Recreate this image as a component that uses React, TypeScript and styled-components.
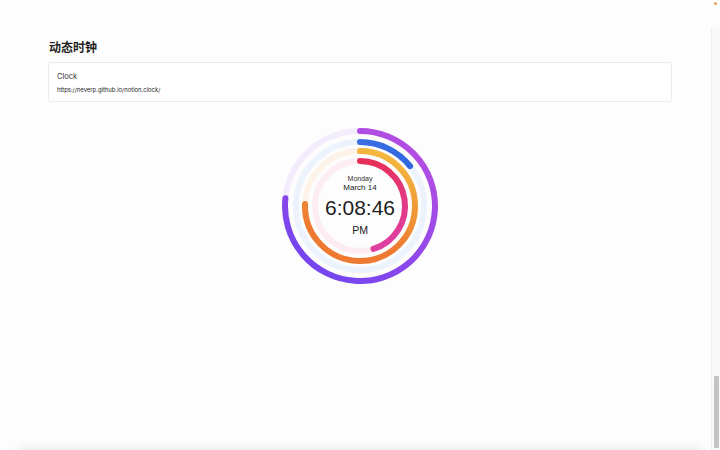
import React from "react"
import styled, { createGlobalStyle } from "styled-components"

const GlobalStyle = createGlobalStyle`
  html, body {
    margin: 0;
    padding: 0;
    background: #fdfdfd;
    overflow: hidden;
  }
  body {
    font-family: Inter, "Liberation Sans", "Noto Sans CJK SC", sans-serif;
    color: #222;
  }
`

const Page = styled.div`
  width: 720px;
  height: 450px;
  position: relative;
  overflow: hidden;
`

const Content = styled.main`
  width: 624px;
  margin-left: 48px;
  padding-top: 37px;
  display: flex;
  flex-direction: column;
`

const Title = styled.h1`
  margin: 0 0 0 1px;
  font-size: 12px;
  line-height: 20px;
  font-weight: 700;
  color: #1f1f1f;
  font-family: "Noto Sans CJK SC", sans-serif;
`

const Card = styled.div`
  margin-top: 5px;
  height: 38px;
  border: 1px solid #ececec;
  border-radius: 3px;
  background: #fff;
  padding: 0 8px;
  display: flex;
  flex-direction: column;
  justify-content: center;
  gap: 5px;
`

const CardTitle = styled.div`
  font-size: 7.5px;
  line-height: 9px;
  color: #333;
`

const CardLink = styled.div`
  font-size: 5.9px;
  line-height: 7px;
  color: #222;
`

const ClockWrap = styled.div`
  margin-top: 24px;
  align-self: center;
  display: grid;
  width: 160px;
  height: 160px;
  > * {
    grid-area: 1 / 1;
  }
`

const Face = styled.div`
  display: flex;
  flex-direction: column;
  align-items: center;
  justify-content: center;
  padding-bottom: 2px;
  font-family: "Liberation Sans", Arial, sans-serif;
`

const Weekday = styled.div`
  font-size: 7px;
  line-height: 8px;
  color: #333;
`

const DateText = styled.div`
  font-size: 8px;
  line-height: 10px;
  color: #222;
`

const Time = styled.div`
  font-size: 21px;
  line-height: 24px;
  margin-top: 3px;
  color: #1d1d1d;
`

const Meridiem = styled.div`
  font-size: 10.5px;
  line-height: 12px;
  margin-top: 4px;
  color: #222;
`

const ScrollTrack = styled.div`
  position: absolute;
  right: 0;
  top: 28px;
  bottom: 0;
  width: 8px;
  background: #f9f9f9;
  border-left: 1px solid #efefef;
`

const ScrollThumb = styled.div`
  position: absolute;
  left: 2px;
  right: 1px;
  top: 348px;
  bottom: 2px;
  background: #c4c4c4;
  border-radius: 1px;
`

const Dot = styled.div`
  position: absolute;
  right: 3px;
  top: 2px;
  width: 3px;
  height: 3px;
  border-radius: 50%;
  background: #e9a35a;
`

const BottomShadow = styled.div`
  position: absolute;
  left: 16px;
  right: 16px;
  bottom: -10px;
  height: 10px;
  box-shadow: 0 -3px 8px rgba(0, 0, 0, 0.08);
  border-radius: 8px 8px 0 0;
  background: #f4f4f4;
`

type Ring = {
  r: number
  frac: number
  track: string
  grad: string
}

const rings: Ring[] = [
  { r: 75, frac: 46 / 60, track: "#f3ecfc", grad: "gPurple" },
  { r: 64, frac: 1 / 7, track: "#edf3fd", grad: "gBlue" },
  { r: 55, frac: (18 + 8 / 60) / 24, track: "#fdf3e8", grad: "gOrange" },
  { r: 45, frac: 14 / 31, track: "#fdedf3", grad: "gRed" },
]

// clockwise arc from 12 o'clock covering frac of the circle
const arcPath = (r: number, frac: number) => {
  const a = frac * 2 * Math.PI
  const x = 80 + r * Math.sin(a)
  const y = 80 - r * Math.cos(a)
  const large = frac > 0.5 ? 1 : 0
  return `M 80 ${80 - r} A ${r} ${r} 0 ${large} 1 ${x.toFixed(2)} ${y.toFixed(2)}`
}

const RingClock: React.FC = () => (
  <svg width="160" height="160" viewBox="0 0 160 160">
    <defs>
      <linearGradient id="gPurple" x1="0.75" y1="0" x2="0.15" y2="0.9">
        <stop offset="0" stopColor="#b64ee2" />
        <stop offset="1" stopColor="#7445ee" />
      </linearGradient>
      <linearGradient id="gBlue" x1="0" y1="0" x2="1" y2="1">
        <stop offset="0" stopColor="#3a6ce2" />
        <stop offset="1" stopColor="#3068e0" />
      </linearGradient>
      <linearGradient id="gOrange" x1="0.6" y1="0" x2="0.35" y2="0.75">
        <stop offset="0" stopColor="#f3b63e" />
        <stop offset="1" stopColor="#ee7a32" />
      </linearGradient>
      <linearGradient id="gRed" x1="0.3" y1="0" x2="0.5" y2="1">
        <stop offset="0" stopColor="#e6305a" />
        <stop offset="1" stopColor="#de40a2" />
      </linearGradient>
    </defs>
    {rings.map((ring) => (
      <g key={ring.r}>
        <circle cx="80" cy="80" r={ring.r} fill="none" stroke={ring.track} strokeWidth="6" />
        <path
          d={arcPath(ring.r, ring.frac)}
          fill="none"
          stroke={`url(#${ring.grad})`}
          strokeWidth="6"
          strokeLinecap="round"
        />
      </g>
    ))}
  </svg>
)

const App: React.FC = () => {
  return (
    <Page>
      <GlobalStyle />
      <Content>
        <Title>动态时钟</Title>
        <Card>
          <CardTitle>Clock</CardTitle>
          <CardLink>https://neverp.github.io/notion.clock/</CardLink>
        </Card>
        <ClockWrap>
          <RingClock />
          <Face>
            <Weekday>Monday</Weekday>
            <DateText>March 14</DateText>
            <Time>6:08:46</Time>
            <Meridiem>PM</Meridiem>
          </Face>
        </ClockWrap>
      </Content>
      <ScrollTrack>
        <ScrollThumb />
      </ScrollTrack>
      <Dot />
      <BottomShadow />
    </Page>
  )
}

export default App
